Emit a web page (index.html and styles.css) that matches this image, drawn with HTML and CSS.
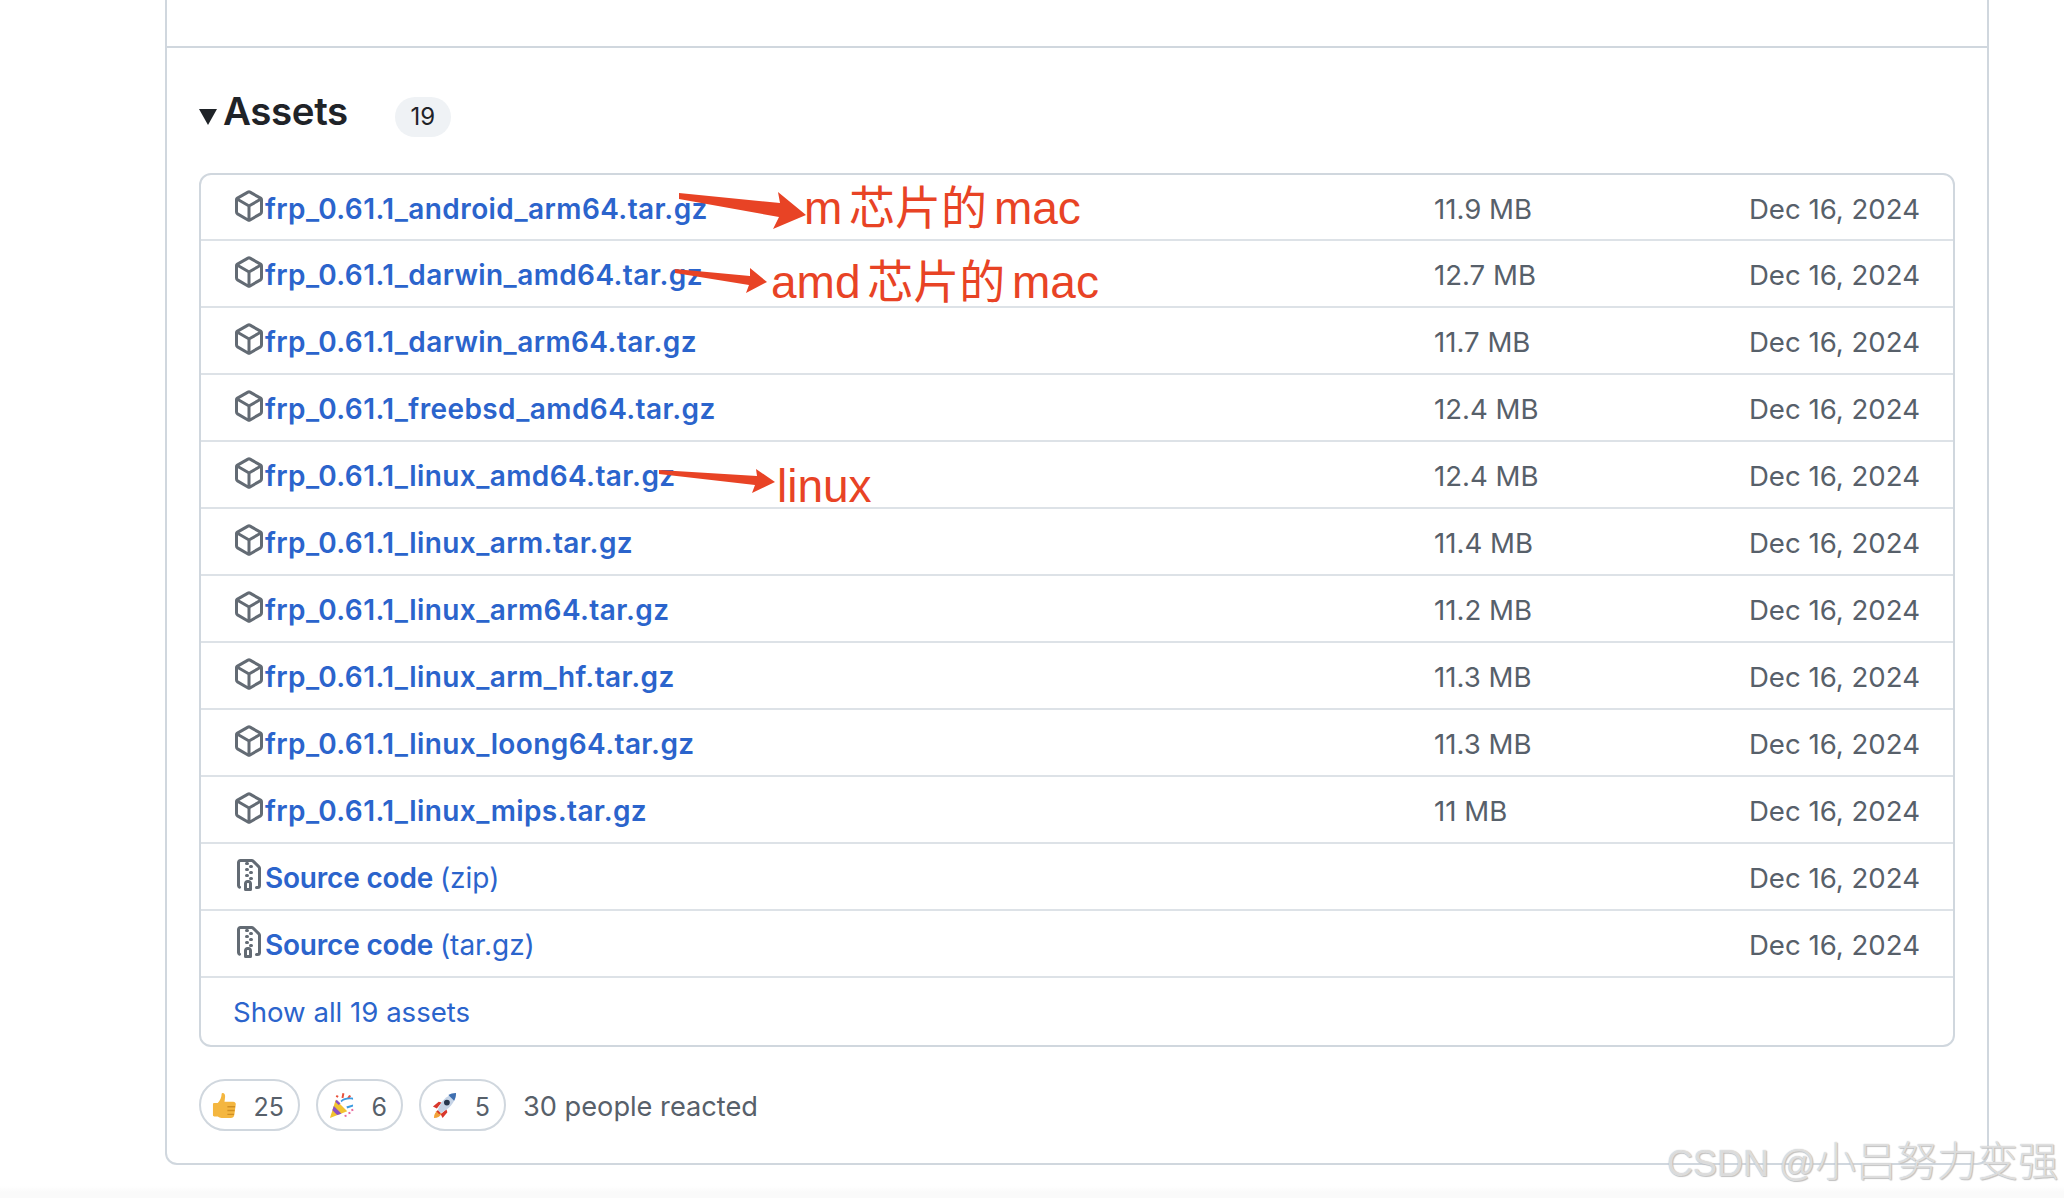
FILE: index.html
```html
<!DOCTYPE html>
<html lang="en">
<head>
<meta charset="utf-8">
<title>Assets</title>
<link rel="stylesheet" href="styles.css">
</head>
<body>
<svg width="0" height="0" class="defs">
  <symbol id="pkg" viewBox="0 0 16 16"><path d="m8.878.392 5.25 3.045c.54.314.872.89.872 1.514v6.098a1.75 1.75 0 0 1-.872 1.514l-5.25 3.045a1.75 1.75 0 0 1-1.756 0l-5.25-3.045A1.75 1.75 0 0 1 1 11.049V4.951c0-.624.332-1.201.872-1.514L7.122.392a1.75 1.75 0 0 1 1.756 0ZM7.875 1.69l-4.63 2.685L8 7.133l4.755-2.758-4.63-2.685a.248.248 0 0 0-.25 0ZM2.5 5.677v5.372c0 .09.047.171.125.216l4.625 2.683V8.432Zm6.25 8.271 4.625-2.683a.25.25 0 0 0 .125-.216V5.677L8.75 8.432Z"/></symbol>
  <symbol id="zip" viewBox="0 0 16 16"><path d="M3.5 1.75v11.5c0 .09.048.173.126.217a.75.75 0 0 1-.752 1.298A1.748 1.748 0 0 1 2 13.25V1.75C2 .784 2.784 0 3.75 0h5.586c.464 0 .909.185 1.237.513l2.914 2.914c.329.328.513.773.513 1.237v8.586A1.75 1.75 0 0 1 12.25 15h-.5a.75.75 0 0 1 0-1.5h.5a.25.25 0 0 0 .25-.25V4.664a.25.25 0 0 0-.073-.177L9.513 1.573a.25.25 0 0 0-.177-.073H7.25a.75.75 0 0 1 0 1.5h-.5a.75.75 0 0 1 0-1.5h-3a.25.25 0 0 0-.25.25Zm3.75 8.75h.5c.966 0 1.75.784 1.75 1.75v3a.75.75 0 0 1-.75.75h-2.5a.75.75 0 0 1-.75-.75v-3c0-.966.784-1.75 1.75-1.75ZM6 5.25a.75.75 0 0 1 .75-.75h.5a.75.75 0 0 1 0 1.5h-.5A.75.75 0 0 1 6 5.25Zm.75 2.25h.5a.75.75 0 0 1 0 1.5h-.5a.75.75 0 0 1 0-1.5ZM8 6.75A.75.75 0 0 1 8.75 6h.5a.75.75 0 0 1 0 1.5h-.5A.75.75 0 0 1 8 6.75ZM8.75 3h.5a.75.75 0 0 1 0 1.5h-.5a.75.75 0 0 1 0-1.5ZM8 9.75A.75.75 0 0 1 8.75 9h.5a.75.75 0 0 1 0 1.5h-.5A.75.75 0 0 1 8 9.75Zm-1 2.5v2.25h1v-2.25a.25.25 0 0 0-.25-.25h-.5a.25.25 0 0 0-.25.25Z"/></symbol>
</svg>
<main class="page">
  <section class="release">
    <div class="release-top"></div>
    <div class="release-body">
      <div class="assets-head">
        <span class="caret"></span>
        <h3 class="assets-title">Assets</h3>
        <span class="counter">19</span>
      </div>
      <div class="assets">
        <div class="row"><svg class="ico"><use href="#pkg"/></svg><a class="name">frp_0.61.1_android_arm64.tar.gz</a><span class="size">11.9 MB</span><span class="date">Dec 16, 2024</span></div>
        <div class="row"><svg class="ico"><use href="#pkg"/></svg><a class="name">frp_0.61.1_darwin_amd64.tar.gz</a><span class="size">12.7 MB</span><span class="date">Dec 16, 2024</span></div>
        <div class="row"><svg class="ico"><use href="#pkg"/></svg><a class="name">frp_0.61.1_darwin_arm64.tar.gz</a><span class="size">11.7 MB</span><span class="date">Dec 16, 2024</span></div>
        <div class="row"><svg class="ico"><use href="#pkg"/></svg><a class="name">frp_0.61.1_freebsd_amd64.tar.gz</a><span class="size">12.4 MB</span><span class="date">Dec 16, 2024</span></div>
        <div class="row"><svg class="ico"><use href="#pkg"/></svg><a class="name">frp_0.61.1_linux_amd64.tar.gz</a><span class="size">12.4 MB</span><span class="date">Dec 16, 2024</span></div>
        <div class="row"><svg class="ico"><use href="#pkg"/></svg><a class="name">frp_0.61.1_linux_arm.tar.gz</a><span class="size">11.4 MB</span><span class="date">Dec 16, 2024</span></div>
        <div class="row"><svg class="ico"><use href="#pkg"/></svg><a class="name">frp_0.61.1_linux_arm64.tar.gz</a><span class="size">11.2 MB</span><span class="date">Dec 16, 2024</span></div>
        <div class="row"><svg class="ico"><use href="#pkg"/></svg><a class="name">frp_0.61.1_linux_arm_hf.tar.gz</a><span class="size">11.3 MB</span><span class="date">Dec 16, 2024</span></div>
        <div class="row"><svg class="ico"><use href="#pkg"/></svg><a class="name">frp_0.61.1_linux_loong64.tar.gz</a><span class="size">11.3 MB</span><span class="date">Dec 16, 2024</span></div>
        <div class="row"><svg class="ico"><use href="#pkg"/></svg><a class="name">frp_0.61.1_linux_mips.tar.gz</a><span class="size">11 MB</span><span class="date">Dec 16, 2024</span></div>
        <div class="row"><svg class="ico"><use href="#zip"/></svg><a class="name name-source">Source code <span class="ext">(zip)</span></a><span class="size"></span><span class="date">Dec 16, 2024</span></div>
        <div class="row"><svg class="ico"><use href="#zip"/></svg><a class="name name-source">Source code <span class="ext">(tar.gz)</span></a><span class="size"></span><span class="date">Dec 16, 2024</span></div>
        <div class="row row-last"><a class="show-all">Show all 19 assets</a></div>
      </div>
      <div class="reactions">
        <span class="pill pill-wide">
          <svg class="emoji" viewBox="0 0 26 28"><path fill="#f4b63f" d="M11 1c2 0 3 2 2.600 4.500L13 10h9c2 0 3 1.500 2.700 3l-1.500 11c-.3 2-1.700 3-3.700 3H10c-1.500 0-3-.6-4-1.500H2.500C1.500 25.500 1 25 1 24V13c0-1 .5-1.500 1.500-1.500H6C8.500 9 10 5 10 2c0-.6.4-1 1-1Z"/><path fill="#d08f22" d="M24 14.500H16v1.500h8zM23.600 18.500H16V20h7.400zM23 22.500H16V24h6.800z"/></svg>
          <span class="count">25</span>
        </span>
        <span class="pill">
          <svg class="emoji" viewBox="0 0 26 28"><path fill="#f2c230" d="M1 27 7 8l12 12Z"/><path fill="#8b4fc4" d="M3.500 19 5 14.500l8 8-4.500 1.500ZM6.500 10 8 8l4 4-2 1.500Z"/><path fill="#e8503a" d="M8 3l2 1-1 2-2-1zM21 3l2 1-2 3-2-1zM14 1l2 .5-1 5-2-.5z"/><path fill="#3d9be0" d="M12 9c3-3 8-4 13-3v2c-5-1-9 0-12 2.500zM18 15l7-2v2l-6 2z"/><path fill="#e86aa0" d="M20 21l2-.5.5 2-2 .5zM16 24l2-.5.5 2-2 .5zM23 18l2-.5.5 2-2 .5z"/></svg>
          <span class="count">6</span>
        </span>
        <span class="pill">
          <svg class="emoji" viewBox="0 0 26 28"><path fill="#f2a33a" d="M2 27c0-4 2-7 5-8l3 3c-1 3-4 5-8 5Z"/><path fill="#d8372c" d="M1 15l6-5 3 1-5 6ZM11 27l5-6-1-3-6 5Z"/><path fill="#c5d3e6" d="M6 19C8 11 15 3 25 1c0 10-8 17-16 21Z"/><path fill="#3f6fb0" d="M25 1c0 3-.7 5.500-2 8l-6-6c2-1 5-2 8-2Z"/><circle cx="15.500" cy="11" r="3" fill="#26364d"/><path fill="#d8372c" d="M6 19l3 3-1.500 1-3-3Z"/></svg>
          <span class="count">5</span>
        </span>
        <span class="reacted">30 people reacted</span>
      </div>
    </div>
  </section>
</main>

<svg class="arrows" viewBox="0 0 2064 1198" aria-hidden="true">
  <polygon points="679,193 780,203 778,192 806,215 773,229 779,217 679,199"/>
  <polygon points="675,269 750,276 750,268 767,282 746,293 749,285 675,273"/>
  <polygon points="659,470 757,476 756,469 775,482 752,493 755,485 659,474"/>
</svg>
<span class="note note-m">m 芯片的 mac</span>
<span class="note note-amd">amd 芯片的 mac</span>
<span class="note note-linux">linux</span>
<span class="watermark"><span class="wm-latin">CSDN @</span>小吕努力变强</span>
</body>
</html>
```
FILE: styles.css
```css
* { box-sizing: border-box; }
html, body { margin: 0; height: 100%; }
body {
  position: relative;
  height: 1198px;
  overflow: hidden;
  background: linear-gradient(#fff 1186px, #fafafa 1192px);
  font-family: Inter, "Noto Sans", sans-serif;
  color: #1f2328;
}
.defs { position: absolute; }
.page { padding-left: 165px; width: 1989px; }
.release {
  border: 2px solid #d0d7de;
  border-top: 0;
  border-radius: 0 0 12px 12px;
  height: 1165px;
}
.release-top { height: 48px; border-bottom: 2px solid #d0d7de; }
.release-body { padding: 0 32px; }
.assets-head { display: flex; align-items: center; height: 125px; padding-top: 6px; }
.caret {
  width: 0; height: 0;
  border-left: 9px solid transparent;
  border-right: 9px solid transparent;
  border-top: 16px solid #1f2328;
  margin-top: 6px;
  margin-right: 6px;
}
.assets-title { margin: 0 47px 0 0; font-size: 38.5px; font-weight: 600; letter-spacing: -0.4px; line-height: 48px; transform: translateY(-3px); }
.counter {
  display: flex; align-items: center; justify-content: center;
  width: 56px; height: 40px;
  margin-top: 6px;
  border-radius: 20px;
  background: #eff2f5;
  font-size: 24px;
}
.assets { border: 2px solid #d0d7de; border-radius: 12px; width: 1756px; height: 874px; }
.row {
  display: flex; align-items: center;
  height: 67px;
  padding: 3px 33px 0 32px;
  border-bottom: 2px solid #dde2e7;
  font-size: 27.6px;
}
.row:first-child { height: 66px; }
.row-last { border-bottom: 0; height: 67px; padding-top: 0; }
.ico { width: 32px; height: 32px; fill: #636b74; flex: none; margin-top: -6px; }
.name { flex: 1; font-size: 28px; letter-spacing: .4px; font-weight: 600; color: #2b64cc; white-space: pre; }
.name-source { letter-spacing: -.2px; }
.ext { font-weight: 400; letter-spacing: 0; }
.size { width: 300px; color: #57606a; }
.date { width: 186px; text-align: right; color: #57606a; white-space: nowrap; }
.show-all { color: #2b64cc; }
.reactions { display: flex; align-items: center; gap: 16px; margin-top: 32px; font-size: 27.2px; color: #57606a; }
.pill {
  display: flex; align-items: center; justify-content: space-between;
  width: 87px; height: 52px;
  padding: 0 14px 0 11px;
  border: 2px solid #d0d7de;
  border-radius: 26px;
  font-size: 25px;
}
.pill-wide { width: 101px; }
.emoji { width: 25px; height: 27px; flex: none; }
.count { padding-top: 3px; }
.reacted { margin-left: 1px; padding-top: 3px; }
.arrows { position: absolute; left: 0; top: 0; width: 2064px; height: 1198px; fill: #e84325; pointer-events: none; }
.note {
  position: absolute;
  font-family: "Liberation Sans", "Noto Sans CJK SC", sans-serif;
  font-size: 46px;
  line-height: 56px;
  word-spacing: -6px;
  color: #e84325;
  white-space: nowrap;
}
.note-m { left: 804px; top: 180px; }
.note-amd { left: 771px; top: 254px; }
.note-linux { left: 777px; top: 458px; }
.watermark {
  position: absolute;
  left: 1667px; top: 1133px;
  font-family: "Noto Sans CJK SC", sans-serif;
  font-size: 40.5px;
  font-weight: 300;
  line-height: 52px;
  color: rgba(255,255,255,.6);
  text-shadow: 0 0 1px #a8a8a8, 1px 1px 1px #c4c4c4;
  white-space: nowrap;
}
.wm-latin { font-family: "Liberation Sans", sans-serif; font-size: 36px; }
```
